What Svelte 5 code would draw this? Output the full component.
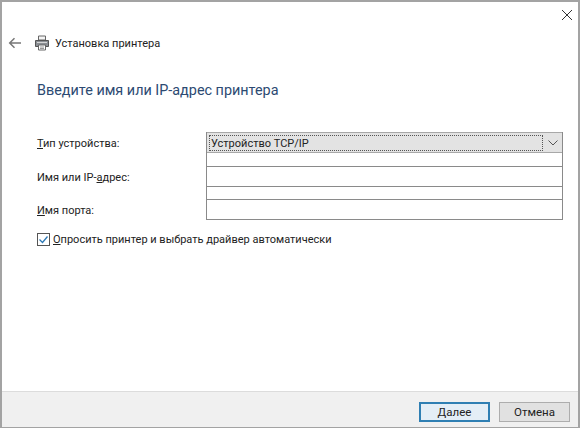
<script>
    const fields = [
        { before: '', key: 'И', after: 'мя порта:' },
    ];
</script>

<div class="window">
    <button class="close" aria-label="Закрыть">
        <svg width="12" height="12" viewBox="0 0 12 12"><path d="M1 1l10 10M11 1L1 11" stroke="#333" fill="none" /></svg>
    </button>

    <div class="main">
        <div class="nav">
            <svg class="back" width="14" height="12" viewBox="0 0 14 12">
                <path d="M13 6H2M6.500 1.200 1.700 6l4.800 4.800" stroke="#777" stroke-width="1.500" fill="none" />
            </svg>
            <svg class="printer" width="16" height="16" viewBox="0 0 16 16">
                <path d="M4.500 1h7v4h-7z" fill="#f4f4f4" stroke="#666" />
                <path d="M1.500 5.500h13v6h-13z" fill="#8b8f94" stroke="#555" />
                <path d="M3 7.500h10" stroke="#d5d5d5" />
                <path d="M4.500 10h7v5h-7z" fill="#fff" stroke="#666" />
                <path d="M6 12h4M6 13.500h4" stroke="#999" />
            </svg>
            <span>Установка принтера</span>
        </div>

        <h1>Введите имя или IP-адрес принтера</h1>

        <div class="form">
            <div class="row">
                <label for="type"><u>Т</u>ип устройства:</label>
                <div class="cell">
                    <div class="combo" id="type">
                        <span class="value">Устройство TCP/IP</span>
                        <svg width="10" height="6" viewBox="0 0 10 6"><path d="M.5.500 5 5 9.500.500" stroke="#555" fill="none" /></svg>
                    </div>
                </div>
            </div>
            <div class="row">
                <label for="host">Имя или IP-<u>а</u>дрес:</label>
                <div class="cell gap13"><input id="host" /></div>
            </div>
            {#each fields as f}
                <div class="row">
                    <label for="port">{f.before}<u>{f.key}</u>{f.after}</label>
                    <div class="cell gap12"><input id="port" /></div>
                </div>
            {/each}
        </div>

        <label class="check">
            <svg width="13" height="13" viewBox="0 0 13 13">
                <rect x=".5" y=".5" width="12" height="12" fill="#fff" stroke="#555" />
                <path d="M2.500 6.500l3 3 5-6" stroke="#2b78b5" stroke-width="1.300" fill="none" />
            </svg>
            <span><u>О</u>просить принтер и выбрать драйвер автоматически</span>
        </label>
    </div>

    <div class="footer">
        <button class="btn primary"><u>Д</u>алее</button>
        <button class="btn">Отмена</button>
    </div>
</div>

<style>
    :global(body) {
        margin: 0;
        background: #fff;
    }

    .window {
        position: relative;
        width: 580px;
        height: 428px;
        box-sizing: border-box;
        display: flex;
        flex-direction: column;
        border: solid #a3a3a3;
        border-width: 2px 2px 1px 2px;
        background: #fff;
        font-family: Roboto, "Noto Sans", sans-serif;
        font-size: 11px;
        color: #222;
    }

    .close {
        position: absolute;
        top: 7px;
        right: 5px;
        width: 12px;
        height: 12px;
        padding: 0;
        border: none;
        background: none;
        line-height: 0;
    }

    .main {
        flex: 1;
        padding: 33px 0 0 6px;
    }

    .nav {
        display: flex;
        align-items: center;
        height: 16px;
    }

    .back {
        margin-right: 12px;
    }

    .printer {
        margin-right: 5px;
    }

    h1 {
        margin: 30px 0 0 29px;
        font-size: 14.400px;
        font-weight: 400;
        line-height: 20px;
        color: #2c4a72;
    }

    .form {
        margin: 31px 0 0 29px;
    }

    .row {
        display: flex;
    }

    .row label {
        width: 169px;
        align-self: flex-end;
        height: 21px;
        line-height: 23px;
    }

    .cell {
        width: 357px;
        box-sizing: border-box;
        border: solid #8a8a8a;
        border-width: 0 1px;
    }

    .gap13 {
        padding-top: 13px;
    }

    .gap12 {
        padding-top: 12px;
    }

    .combo {
        display: flex;
        align-items: center;
        justify-content: space-between;
        height: 21px;
        box-sizing: border-box;
        padding: 2px 4px 2px 2px;
        background: #e3e3e3;
        border-top: 1px solid #a8a8a8;
        border-bottom: 1px solid #a8a8a8;
    }

    .combo svg {
        flex: none;
    }

    .value {
        flex: 0 0 334px;
        box-sizing: border-box;
        height: 16px;
        line-height: 15px;
        padding-left: 1px;
        border: 1px dotted #555;
    }

    input {
        display: block;
        width: 100%;
        height: 21px;
        box-sizing: border-box;
        padding: 0;
        border: solid #8a8a8a;
        border-width: 1px 0;
        outline: none;
        background: #fff;
    }

    .check {
        display: flex;
        align-items: center;
        gap: 3px;
        margin: 11px 0 0 29px;
        height: 16px;
    }

    .footer {
        display: flex;
        justify-content: flex-end;
        gap: 9px;
        height: 36px;
        padding: 10px 8px 0 0;
        box-sizing: border-box;
        background: #f0f0f0;
        border-top: 1px solid #dcdcdc;
        font-size: 11.500px;
    }

    .btn {
        width: 71px;
        height: 20px;
        box-sizing: border-box;
        padding: 0;
        border: 1px solid #adadad;
        background: #e1e1e1;
        font: inherit;
        color: inherit;
    }

    .primary {
        border: 2px solid #2f7fb3;
        background: #e4eef6;
    }
</style>
